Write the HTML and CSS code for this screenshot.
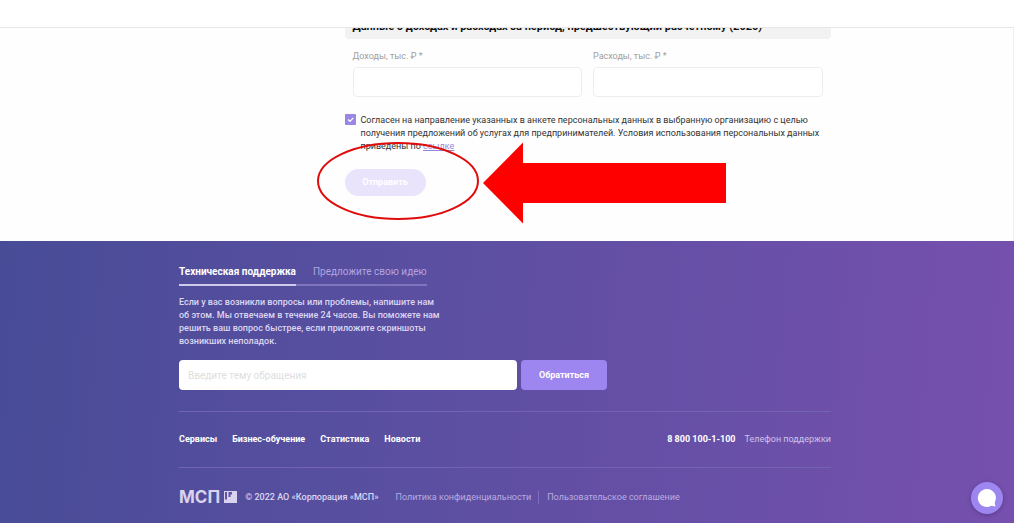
FILE: index.html
```html
<!DOCTYPE html>
<html lang="ru">
<head>
<meta charset="utf-8">
<meta name="viewport" content="width=device-width, initial-scale=1">
<title>Корпорация МСП</title>
<link rel="stylesheet" href="styles.css">
</head>
<body>
<header class="topbar"></header>
<main class="content">
  <div class="container">
    <form class="survey">
      <h2 class="survey-title">Данные о доходах и расходах за период, предшествующий расчётному (2020)</h2>
      <div class="fields">
        <div class="field">
          <label for="income">Доходы, тыс. ₽ *</label>
          <input id="income" type="text">
        </div>
        <div class="field">
          <label for="expenses">Расходы, тыс. ₽ *</label>
          <input id="expenses" type="text">
        </div>
      </div>
      <div class="consent">
        <input class="consent-box" id="consent" type="checkbox" checked>
        <label for="consent">Согласен на направление указанных в анкете персональных данных в выбранную организацию с целью получения предложений об услугах для предпринимателей. Условия использования персональных данных приведены по <a href="#terms">ссылке</a></label>
      </div>
      <div class="actions">
        <button class="submit" type="button">Отправить</button>
        <svg class="callout" width="410" height="82" viewBox="0 0 410 82" aria-hidden="true">
          <ellipse cx="81" cy="39" rx="80" ry="38" fill="none" stroke="#e00b0b" stroke-width="2"/>
          <path d="M166 41 206 0.500V21H409V61H206V81.500Z" fill="#f00"/>
        </svg>
      </div>
    </form>
  </div>
</main>
<footer class="footer">
  <div class="container">
    <div class="tabs" role="tablist">
      <button class="tab tab-active" type="button" role="tab" aria-selected="true">Техническая поддержка</button>
      <button class="tab" type="button" role="tab" aria-selected="false">Предложите свою идею</button>
    </div>
    <p class="support-text">Если у вас возникли вопросы или проблемы, напишите нам об этом. Мы отвечаем в течение 24 часов. Вы поможете нам решить ваш вопрос быстрее, если приложите скриншоты возникших неполадок.</p>
    <form class="ask">
      <input class="ask-input" type="text" placeholder="Введите тему обращения" aria-label="Тема обращения">
      <button class="ask-button" type="button">Обратиться</button>
    </form>
    <div class="footer-row">
      <nav class="links">
        <a href="#services">Сервисы</a>
        <a href="#learning">Бизнес-обучение</a>
        <a href="#stats">Статистика</a>
        <a href="#news">Новости</a>
      </nav>
      <div class="phone"><a href="tel:88001001100">8 800 100-1-100</a><span>Телефон поддержки</span></div>
    </div>
    <div class="legal">
      <a class="logo" href="#home">
        <span>МСП</span>
        <svg width="13" height="12" viewBox="0 0 13 12" aria-hidden="true">
          <path d="M0 0H13V12H0Z" fill="#d9d3f0"/>
          <path d="M1 1H3V8.500H1ZM4.500 1H8V3.500H6.500V6H4.500Z" fill="#6254a5"/>
        </svg>
      </a>
      <span class="copyright">© 2022 АО «Корпорация «МСП»</span>
      <div class="policies">
        <a href="#privacy">Политика конфиденциальности</a>
        <a href="#agreement">Пользовательское соглашение</a>
      </div>
    </div>
  </div>
</footer>
<button class="chat" type="button" aria-label="Открыть чат">
  <svg width="20" height="20" viewBox="0 0 20 20" aria-hidden="true"><path d="M10 1A9 9 0 1 0 14.500 17.700L18.500 18.500 17.700 14.500A9 9 0 0 0 10 1Z" fill="#fff"/></svg>
</button>
</body>
</html>
```
FILE: styles.css
```css
* { box-sizing: border-box; }

body {
  margin: 0;
  background: #fefefe;
  color: #333;
  font: 9px/13px Roboto, "Liberation Sans", sans-serif;
}

button, input { font: inherit; }
button { border: 0; padding: 0; cursor: pointer; }
a { color: inherit; text-decoration: none; }

.topbar {
  position: relative;
  z-index: 1;
  height: 28px;
  background: #fff;
  border-bottom: 1px solid #e8e8e8;
}

.content { padding: 0 4px 45px 0; border-right: 1px solid #f0f0f0; }
.container { max-width: 652px; margin: 0 auto; }
.survey { max-width: 486px; margin-left: auto; }

.survey-title {
  margin: -14px 0 0;
  padding: 6px 8px;
  border-radius: 4px;
  background: #f2f2f2;
  color: #111;
  font-size: 11px;
  line-height: 13px;
  font-weight: 700;
  white-space: nowrap;
}

.fields { display: flex; gap: 11px; padding: 11px 8px 0; }
.field { flex: 1; display: flex; flex-direction: column; gap: 4px; color: #a0a0a0; }
.field input {
  width: 100%;
  height: 30px;
  padding: 0 8px;
  border: 1px solid #ededed;
  border-radius: 4px;
  background: #fff;
}

.consent { display: flex; align-items: flex-start; gap: 5px; margin-top: 17px; }
.consent-box {
  flex: none;
  appearance: none;
  width: 11px;
  height: 11px;
  margin: 0;
  border-radius: 1px;
  background: #9a86e3 url("data:image/svg+xml,%3Csvg xmlns='http://www.w3.org/2000/svg' viewBox='0 0 11 11'%3E%3Cpath d='M3 5.500 5 7.300 8.300 3.800' fill='none' stroke='white' stroke-width='1.200'/%3E%3C/svg%3E");
}
.consent a { color: #9a86d8; text-decoration: underline; }

.actions { position: relative; margin-top: 16px; }
.submit {
  width: 81px;
  height: 27px;
  border-radius: 14px;
  background: #e9e4fc;
  color: #fff;
  font-weight: 700;
}
.callout { position: absolute; left: -28px; top: -27px; pointer-events: none; }

.footer {
  padding: 24px 4px 19px 0;
  background: linear-gradient(95deg, #484c97, #5b4fa1 42%, #7650ae);
  color: #fff;
}

.tabs { display: flex; width: fit-content; }
.tab {
  padding: 0 0 5px 17px;
  border-bottom: 2px solid #8074be;
  background: none;
  color: #b3a4e0;
  font-size: 10px;
  line-height: 14px;
}
.tab-active {
  padding-left: 0;
  border-color: #d0caea;
  color: #fff;
  font-weight: 700;
}

.support-text { max-width: 262px; margin: 10px 0 12px; color: #dcd6f2; font-weight: 500; }

.ask { display: flex; gap: 4px; max-width: 428px; }
.ask-input {
  flex: 1;
  min-width: 0;
  height: 30px;
  padding: 0 9px;
  border: 0;
  border-radius: 4px;
  background: #fff;
  font-size: 10px;
}
.ask-input::placeholder { color: #dedede; opacity: 1; }
.ask-button {
  width: 86px;
  border-radius: 4px;
  background: #9d86ef;
  color: #fff;
  font-weight: 700;
}

.footer-row {
  display: flex;
  justify-content: space-between;
  align-items: center;
  height: 57px;
  margin-top: 21px;
  border: solid #7463b3;
  border-width: 1px 0;
}
.links { display: flex; gap: 15px; font-weight: 700; }
.phone { display: flex; gap: 9px; color: #d0c4ea; }
.phone a { color: #fff; font-weight: 700; }

.legal { display: flex; align-items: center; margin-top: 21px; color: #b9ace0; }
.logo {
  display: flex;
  align-items: center;
  gap: 4px;
  margin-right: 8px;
  color: #d9d3f0;
  font: 700 17px/16px Inter, sans-serif;
}
.copyright { margin-right: 17px; color: #dcd6f2; font-weight: 500; }
.policies { display: flex; }
.policies a + a { margin-left: 7px; padding-left: 8px; border-left: 1px solid #7e6bb9; }

.chat {
  position: fixed;
  right: 11px;
  bottom: 9px;
  display: grid;
  place-items: center;
  width: 32px;
  height: 32px;
  border-radius: 50%;
  background: #9d86ef;
  box-shadow: 0 1px 4px rgb(40 20 90 / 35%);
}
```
